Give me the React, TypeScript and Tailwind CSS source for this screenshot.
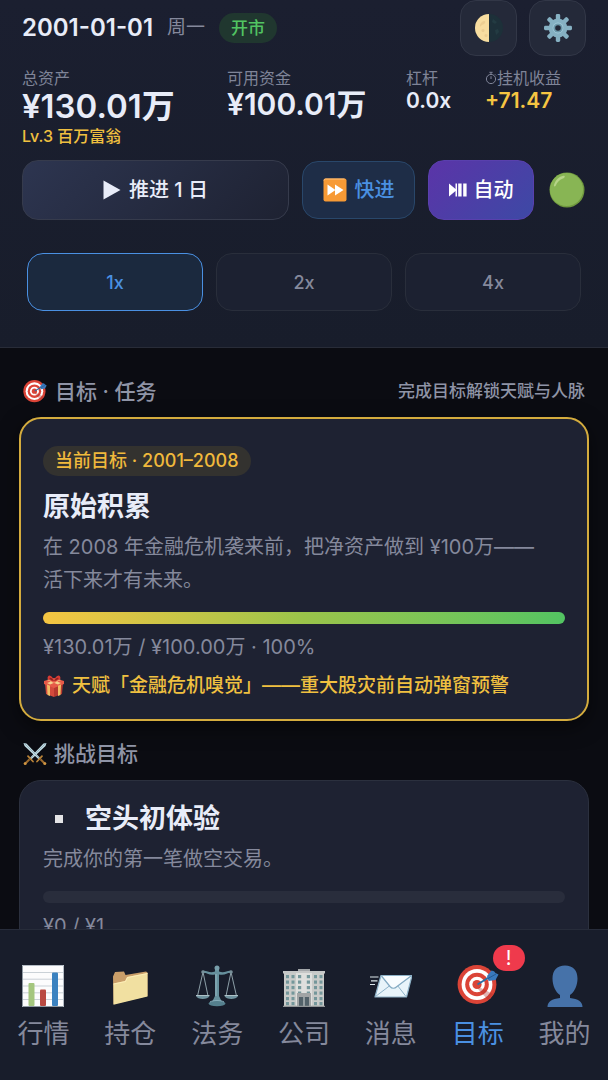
import type { ReactNode } from "react";

type IconProps = { className?: string };

function Moon({ className }: IconProps) {
  return (
    <svg viewBox="0 0 28 28" className={className} aria-hidden="true">
      <circle cx="14" cy="14" r="14" fill="#1d3039" />
      <path d="M14 0a14 14 0 0 0 0 28z" fill="#f8dda0" />
      <path d="M7 8c2-2 4-1 3 1s-3 1-4 3-2-2 1-4z" fill="#e8c88c" opacity=".7" />
      <circle cx="8" cy="16.500" r="1.500" fill="#e8c88c" opacity=".7" />
      <circle cx="11" cy="21.500" r="1.500" fill="#e8c88c" opacity=".7" />
      <path d="M18 5l4 3-2 2-3-2zM20 16l3-1 1 3-3 3z" fill="#233b42" />
    </svg>
  );
}

function Gear({ className }: IconProps) {
  const teeth = [0, 45, 90, 135, 180, 225, 270, 315];
  return (
    <svg viewBox="0 0 28 28" className={className} aria-hidden="true">
      {teeth.map((a) => (
        <rect key={a} x="11.8" y="0" width="4.4" height="8" rx="1.4" fill="#86b1c3" transform={`rotate(${a} 14 14)`} />
      ))}
      <circle cx="14" cy="14" r="9.4" fill="#86b1c3" />
      <circle cx="14" cy="14" r="5.4" fill="#a3cbdb" />
      <circle cx="14" cy="14" r="4.6" fill="#6c98aa" />
      <circle cx="14" cy="14" r="2.800" fill="#232838" />
    </svg>
  );
}

function Stopwatch({ className }: IconProps) {
  return (
    <svg viewBox="0 0 12 14" className={className} fill="none" stroke="currentColor" strokeWidth="1" aria-hidden="true">
      <circle cx="6" cy="8" r="4.6" />
      <path d="M6 8V5.2M6 3.4V1.5M4.4 1.3h3.2M10 3.4l1 1" />
    </svg>
  );
}

function PlayTriangle({ className }: IconProps) {
  return (
    <svg viewBox="0 0 18 20" className={className} fill="currentColor" aria-hidden="true">
      <path d="M.5 .5v19L17.500 10z" />
    </svg>
  );
}

function FastForward({ className }: IconProps) {
  return (
    <svg viewBox="0 0 24 24" className={className} aria-hidden="true">
      <rect x=".5" y=".5" width="23" height="23" rx="2" fill="#f79a35" />
      <path d="M1 2.5A1.5 1.5 0 0 1 2.500 1H21.500" stroke="#ffc27d" fill="none" />
      <path d="M4.500 6.500v11l8-5.500zM12 6.500v11l8.500-5.500z" fill="#fff" />
    </svg>
  );
}

function PlayPause({ className }: IconProps) {
  return (
    <svg viewBox="0 0 18 14" className={className} fill="currentColor" aria-hidden="true">
      <path d="M0 .5l6.500 5.500V.5h1.500v13H6.500v-5.500L0 13.500zM9.200 .5h3.400v13H9.200zM14.200 .5h3.400v13h-3.400z" />
    </svg>
  );
}

function GreenBall({ className }: IconProps) {
  return (
    <svg viewBox="0 0 36 36" className={className} aria-hidden="true">
      <circle cx="18" cy="18" r="17.500" fill="#6f983e" />
      <circle cx="17.500" cy="17.500" r="16.600" fill="#88b554" />
      <path d="M5 13C6.500 8 10 4.500 14.500 3.800c2 0 1.600 1.800-.6 2.800C10 8.300 8.200 10.500 6.800 13.400 6 15 4.500 14.600 5 13z" fill="#b6d488" />
    </svg>
  );
}

function Target({ className }: IconProps) {
  return (
    <svg viewBox="0 3 42 42" className={className} aria-hidden="true">
      <circle cx="20" cy="22.500" r="19.400" fill="#db4437" />
      <circle cx="20" cy="22.500" r="15.400" fill="#fff" />
      <circle cx="20" cy="22.500" r="11.800" fill="#db4437" />
      <circle cx="20" cy="22.500" r="7.800" fill="#fff" />
      <circle cx="20" cy="22.500" r="4.600" fill="#db4437" />
      <path d="M22 25L36 32l-5 6-10-11z" fill="#a92e2a" opacity=".35" />
      <path d="M20.500 22.500L34 14" stroke="#2870a8" strokeWidth="1.800" />
      <path d="M30 14l4.500-5.500 2.500.8 1.500 1.700 3 1.500-3 5.500-7 1z" fill="#3979bd" />
      <path d="M31 16.500l8-4.500" stroke="#245991" strokeWidth="1" />
    </svg>
  );
}

function Gift({ className }: IconProps) {
  return (
    <svg viewBox="0 0 22 22" className={className} aria-hidden="true">
      <path d="M2 8l9 4v10l-8-3z" fill="#d34a3c" />
      <path d="M20 8l-9 4v10l8-3z" fill="#b6382f" />
      <path d="M1 6l10-3 10 3v3l-10 4L1 9z" fill="#e65a48" />
      <path d="M4 9.500l3 1.200V21l-2.500-1zM15 10.700l3-1.200-.5 10.500-2.500 1z" fill="#f1bd65" />
      <path d="M4 8l11-4 3 1L7 9.500zM18 8L7 4 4 5l11 4.500z" fill="#f5d28b" />
      <path d="M11 6C6 6 3.500 4 5 1.500S10 2 11 6zm0 0c5 0 7.500-2 6-4.500S12 2 11 6z" fill="#d93c35" />
      <path d="M11 6C8 5 6 4 6.500 3S9.500 3 11 6zm0 0c3-1 5-2 4.500-3S12.500 3 11 6z" fill="#8d2420" />
    </svg>
  );
}

function Swords({ className }: IconProps) {
  const sword = (
    <g>
      <path d="M.5 1l3 .6L17 15.800l-1.500 1.500L1.500 4z" fill="#c3dce4" />
      <path d="M1 1l15.500 15.500" stroke="#7fa0ac" strokeWidth=".7" />
      <path d="M14 19.500l5-5.300" stroke="#b98338" strokeWidth="1.800" strokeLinecap="round" />
      <path d="M17.500 17.300l3.700 3.700" stroke="#9c6b2f" strokeWidth="2" />
      <circle cx="21.800" cy="21.500" r="1.500" fill="#d19642" />
    </g>
  );
  return (
    <svg viewBox="0 0 24 24" className={className} aria-hidden="true">
      <g transform="translate(24 0) scale(-1 1)">{sword}</g>
      {sword}
    </svg>
  );
}

function BarChart({ className }: IconProps) {
  return (
    <svg viewBox="0 0 42 42" className={className} aria-hidden="true">
      <rect width="42" height="42" fill="#fcfcfd" />
      <path d="M0 7.500h42M0 14.200h42M0 21h42M0 27.800h42M0 34.500h42" stroke="#b4bec5" strokeWidth=".7" />
      <path d="M.5 0v41.500H42" stroke="#909aa3" fill="none" />
      <path d="M0 .5h41.500V42" stroke="#b5bdc6" fill="none" />
      <rect x="6.500" y="18" width="6" height="23" rx="1" fill="#a4c67e" />
      <rect x="18" y="24.500" width="6" height="16.500" rx="1" fill="#ba4a42" />
      <rect x="30" y="7.500" width="6" height="33.500" rx="1" fill="#3b82c0" />
    </svg>
  );
}

function Folder({ className }: IconProps) {
  return (
    <svg viewBox="0 0 42 42" className={className} aria-hidden="true">
      <path d="M4 11.500l2-4.500 9-.5 1.500 3.500L37 6.500l1.500 1V31L4.500 39z" fill="#c99e69" />
      <path d="M4.500 18.500l11.500-2.500 2-4L38.500 8v23.500L4.500 39.800z" fill="#f1e0a1" />
      <path d="M4.500 19l12-2.500 2-4L38.500 8.500" stroke="#fff0bd" strokeWidth=".8" fill="none" />
    </svg>
  );
}

function Scales({ className }: IconProps) {
  return (
    <svg viewBox="0 0 42 42" className={className} aria-hidden="true">
      <path d="M7 7L1.500 31M7 7l5 24M35 7l-5 24M35 7l5.500 24" stroke="#9aaeb5" strokeWidth=".9" fill="none" />
      <path d="M6 6c5-1.500 7 3 13 .5V4h4v2.500C29 9 31 4.500 36 6l-.5 2c-4-1-6 3-12.500 1.500V31l3 6H16l3-6V9.500C12.500 11 10.500 7 6.500 8z" fill="#66909d" />
      <circle cx="21" cy="3" r="2.500" fill="#789fab" />
      <circle cx="7" cy="7" r="1.800" fill="#78909a" />
      <circle cx="35" cy="7" r="1.800" fill="#78909a" />
      <path d="M0 31h13.500c-1.500 4-12 4-13.500 0zM28.500 31H42c-1.500 4-12 4-13.500 0z" fill="#6f929e" />
      <path d="M0 30.500h13.500M28.500 30.500H42" stroke="#aec1c7" />
      <path d="M20 9v22" stroke="#93b6c0" strokeWidth="1" />
      <ellipse cx="21" cy="38.500" rx="8.500" ry="2.800" fill="#55808e" />
      <path d="M14 37c3-2 11-2 14 0" stroke="#88aebb" fill="none" />
    </svg>
  );
}

function Building({ className }: IconProps) {
  const rows = [10, 15.5, 21, 26.5, 32, 37];
  return (
    <svg viewBox="0 0 42 42" className={className} aria-hidden="true">
      <path d="M15 4h12v4H15z" fill="#a3a7aa" />
      <path d="M0 6h42v2.500H0z" fill="#c5c7c7" />
      <path d="M1 8h40v34H1z" fill="#c9cbc9" />
      <path d="M13 8h16v34H13z" fill="#dedfdd" />
      {rows.map((y) => (
        <g key={y} fill="#74979b">
          <rect x="3" y={y} width="3" height="3.200" />
          <rect x="8.500" y={y} width="3" height="3.200" />
          <rect x="15" y={y} width="3.200" height="3.200" />
          <rect x="23.800" y={y} width="3.200" height="3.200" />
          <rect x="31" y={y} width="3" height="3.200" />
          <rect x="36.500" y={y} width="3" height="3.200" />
        </g>
      ))}
      <path d="M14 28h14v14H14z" fill="#a1a4a5" />
      <path d="M16 32h10v10H16z" fill="#53626a" />
      <path d="M21 32v10" stroke="#c2c6c6" strokeWidth="1.200" />
      <path d="M0 40.800h42V42H0z" fill="#929698" />
    </svg>
  );
}

function Envelope({ className }: IconProps) {
  return (
    <svg viewBox="0 0 42 42" className={className} aria-hidden="true">
      <path d="M11 10.500h31l-5.500 21.500H5z" fill="#e8f4fa" stroke="#8eb2c8" strokeWidth="1.200" strokeLinejoin="round" />
      <path d="M5.500 31.500L20 20.500M36 31.500L27.500 20.500" stroke="#8eb2c8" strokeWidth="1" />
      <path d="M11.500 11L20 21.500c2 2.300 4.500 2.300 7 0L41 11" fill="#f8fcff" stroke="#82a9c2" strokeWidth="1.200" />
      <path d="M0 12h8.500M1 15.800h6.500M0 19.500h5" stroke="#dbe7ec" strokeWidth="1.200" />
    </svg>
  );
}

function Person({ className }: IconProps) {
  return (
    <svg viewBox="0 0 42 42" className={className} aria-hidden="true">
      <path d="M21 .5c8 0 12.500 5 12.500 13 0 7-3 13.500-7.500 16.500v3c8 .8 12.500 3.500 12.500 9h-35c0-5.500 4.500-8.200 12.500-9v-3c-4.500-3-7.500-9.500-7.500-16.500C8.500 5.500 13 .5 21 .5z" fill="#4672a9" />
    </svg>
  );
}

function Stat({ label, children }: { label: ReactNode; children: ReactNode }) {
  return (
    <div>
      <div className="flex items-center whitespace-nowrap text-[16px] leading-[20px] text-[#7f8498]">{label}</div>
      {children}
    </div>
  );
}

const tabs = [
  { label: "行情", Icon: BarChart },
  { label: "持仓", Icon: Folder },
  { label: "法务", Icon: Scales },
  { label: "公司", Icon: Building },
  { label: "消息", Icon: Envelope },
  { label: "目标", Icon: Target, active: true, badge: "!" },
  { label: "我的", Icon: Person },
];

const speeds = ["1x", "2x", "4x"];

export default function App() {
  return (
    <div className="flex h-screen flex-col overflow-hidden bg-[#0b0c12] font-['Inter','Noto_Sans_CJK_SC',sans-serif] text-[#e8ecf8]">
      <header className="shrink-0 border-b border-[#282c38] bg-linear-to-b from-[#1b1f30] to-[#181d2b] px-[22px] pb-9">
        <div className="flex items-center">
          <h1 className="text-[24px] leading-8 font-semibold">2001-01-01</h1>
          <span className="ml-[14px] text-[19px] leading-8 text-[#85899c]">周一</span>
          <span className="ml-[14px] rounded-full bg-[#20372f] px-3 text-[17px] leading-[30px] font-medium text-[#52c462]">开市</span>
          <div className="ml-auto flex gap-3">
            <button aria-label="切换主题" className="flex h-14 w-[57px] items-center justify-center rounded-[16px] border border-[#323747] bg-[#242939]">
              <Moon className="size-7" />
            </button>
            <button aria-label="设置" className="flex h-14 w-[57px] items-center justify-center rounded-[16px] border border-[#323747] bg-[#242939]">
              <Gear className="size-7" />
            </button>
          </div>
        </div>

        <div className="mt-3 grid grid-cols-[205fr_179fr_79fr_101fr]">
          <Stat label="总资产">
            <div className="text-[33px] leading-9 font-semibold whitespace-nowrap">¥130.01万</div>
            <div className="text-[16px] leading-6 font-medium text-[#f0c040]">Lv.3 百万富翁</div>
          </Stat>
          <Stat label="可用资金">
            <div className="text-[30px] leading-8 font-semibold whitespace-nowrap">¥100.01万</div>
          </Stat>
          <Stat label="杠杆">
            <div className="text-[21px] leading-[26px] font-semibold">0.0x</div>
          </Stat>
          <Stat
            label={
              <>
                <Stopwatch className="h-[14px] w-3" />
                挂机收益
              </>
            }
          >
            <div className="text-[21px] leading-[26px] font-semibold text-[#f5c542]">+71.47</div>
          </Stat>
        </div>

        <div className="mt-3 flex items-center gap-[13px]">
          <button className="flex h-[60px] flex-1 items-center justify-center gap-2 rounded-[16px] border border-[#363b4c] bg-linear-[135deg] from-[#2d3550] to-[#1e2232] text-[20px] font-medium">
            <PlayTriangle className="h-5 w-[18px]" />
            推进 1 日
          </button>
          <button className="flex h-[58px] w-[113px] items-center justify-center gap-2 rounded-[16px] border border-[#29476a] bg-[#1e2d47] text-[20px] font-medium text-[#4a90e2]">
            <FastForward className="size-6" />
            快进
          </button>
          <button className="flex h-[60px] w-[106px] items-center justify-center gap-[7px] rounded-[16px] border border-[#5940ad] bg-linear-[135deg] from-[#5b34a8] to-[#3d49a5] text-[20px] font-medium text-white">
            <PlayPause className="h-[14px] w-[18px]" />
            自动
          </button>
          <button aria-label="运行状态" className="flex w-[39px] justify-center">
            <GreenBall className="size-9" />
          </button>
        </div>

        <div className="mt-[33px] grid grid-cols-3 gap-[13px] px-[5px]">
          {speeds.map((speed, i) => (
            <button
              key={speed}
              aria-pressed={i === 0}
              className={
                i === 0
                  ? "h-[58px] rounded-[16px] border border-[#4a90e2] bg-[#1b293e] text-[18px] font-medium text-[#4a90e2]"
                  : "h-[58px] rounded-[16px] border border-[#292e3b] bg-[#1c2131] text-[18px] font-medium text-[#85899c]"
              }
            >
              {speed}
            </button>
          ))}
        </div>
      </header>

      <main className="min-h-0 flex-1 overflow-hidden px-[19px] pt-7">
        <div className="flex h-8 items-center px-1">
          <Target className="size-6" />
          <h2 className="ml-2 text-[21px] leading-8 font-medium text-[#8f94a6]">目标 · 任务</h2>
          <p className="ml-auto text-[17px] font-medium text-[#8f94a6]">完成目标解锁天赋与人脉</p>
        </div>

        <section className="mt-[9px] rounded-[22px] border-2 border-[#d4ac3e] bg-[#1e2232] px-[22px] pt-[27px] pb-[18px] shadow-[0_6px_20px_rgba(0,0,0,0.5)]">
          <div className="flex">
            <span className="rounded-full bg-[#33322f] px-3 text-[18px] leading-[30px] font-medium text-[#f0b93c]">当前目标 · 2001–2008</span>
          </div>
          <h3 className="mt-[13px] text-[27px] leading-9 font-bold">原始积累</h3>
          <p className="mt-[6px] pr-4 text-[20px] leading-[33px] text-[#85899c]">在 2008 年金融危机袭来前，把净资产做到 ¥100万——活下来才有未来。</p>
          <div className="mt-[15px] h-3 rounded-full bg-linear-to-r from-[#f5c542] via-[#9ac44a] to-[#52c462]" />
          <p className="mt-2 text-[20px] leading-[30px] text-[#85899c]">¥130.01万 / ¥100.00万 · 100%</p>
          <div className="mt-[9px] flex items-center text-[19px] leading-[30px] font-medium text-[#f0c040]">
            <Gift className="size-[22px]" />
            <span className="ml-[7px]">天赋「金融危机嗅觉」——重大股灾前自动弹窗预警</span>
          </div>
        </section>

        <div className="mt-[17px] flex h-8 items-center px-1">
          <Swords className="size-6" />
          <h2 className="ml-[7px] text-[21px] leading-8 font-medium text-[#8f94a6]">挑战目标</h2>
        </div>

        <section className="mt-[10px] rounded-[22px] border border-[#2b303e] bg-[#1e2232] px-[23px] pt-5 pb-6">
          <h3 className="flex items-center text-[27px] leading-9 font-bold">
            <span className="flex w-8 justify-center">
              <span className="size-2 bg-[#e4e4e6]" />
            </span>
            <span className="ml-[10px]">空头初体验</span>
          </h3>
          <p className="mt-[6px] text-[20px] leading-[33px] text-[#85899c]">完成你的第一笔做空交易。</p>
          <div className="mt-[15px] h-3 rounded-full bg-[#292d3c]" />
          <p className="mt-2 text-[20px] leading-[30px] text-[#85899c]">¥0 / ¥1</p>
        </section>
      </main>

      <nav className="flex h-[151px] shrink-0 border-t border-[#272c3a] bg-[#181d2b]">
        {tabs.map(({ label, Icon, active, badge }) => (
          <a key={label} href="#" aria-current={active ? "page" : undefined} className="flex flex-1 flex-col items-center pt-[35px]">
            <span className="relative">
              <Icon className="size-[42px]" />
              {badge && (
                <span className="absolute -top-[20px] left-9 flex h-[26px] w-8 items-center justify-center rounded-full bg-[#ef3a4c] text-[20px] leading-none text-white">
                  {badge}
                </span>
              )}
            </span>
            <span className={active ? "mt-[9px] text-[26px] leading-9 text-[#4a90e2]" : "mt-[9px] text-[26px] leading-9 text-[#85899c]"}>{label}</span>
          </a>
        ))}
      </nav>
    </div>
  );
}
